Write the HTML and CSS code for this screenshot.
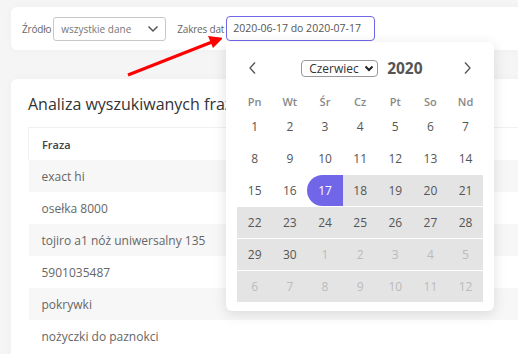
FILE: index.html
```html
<!DOCTYPE html>
<html lang="pl">
<head>
    <meta charset="UTF-8">
    <title>Analiza wyszukiwanych fraz</title>
    <link rel="stylesheet" href="styles.css">
</head>
<body>
    <div class="page">
        <div class="card filters">
            <label class="field-label">Źródło</label>
            <div class="select">
                <span>wszystkie dane</span>
                <svg width="12" height="8" viewBox="0 0 12 8"><path d="M1.5 1.5 L6 6 L10.5 1.5" fill="none" stroke="#555" stroke-width="1.5"/></svg>
            </div>
            <label class="field-label">Zakres dat</label>
            <div class="date-wrap">
                <div class="date-input">2020-06-17 do 2020-07-17</div>

                <div class="picker">
                    <div class="picker-head">
                        <svg class="nav" width="10" height="14" viewBox="0 0 10 14"><path d="M7 1.5 L2 7 L7 12.5" fill="none" stroke="#555" stroke-width="1.3"/></svg>
                        <div class="month-select">Czerwiec
                            <svg width="10" height="7" viewBox="0 0 10 7"><path d="M1.5 1.5 L5 5 L8.5 1.5" fill="none" stroke="#222" stroke-width="2"/></svg>
                        </div>
                        <span class="year">2020</span>
                        <svg class="nav next" width="10" height="14" viewBox="0 0 10 14"><path d="M3 1.5 L8 7 L3 12.5" fill="none" stroke="#555" stroke-width="1.3"/></svg>
                    </div>
                    <div class="weekdays">
                        <span>Pn</span><span>Wt</span><span>Śr</span><span>Cz</span><span>Pt</span><span>So</span><span>Nd</span>
                    </div>
                    <div class="days">
                        <div class="week">
                            <span>1</span><span>2</span><span>3</span><span>4</span><span>5</span><span>6</span><span>7</span>
                        </div>
                        <div class="week">
                            <span>8</span><span>9</span><span>10</span><span>11</span><span>12</span><span>13</span><span>14</span>
                        </div>
                        <div class="week">
                            <span>15</span><span>16</span><span class="start">17</span><span class="range">18</span><span class="range">19</span><span class="range">20</span><span class="range">21</span>
                        </div>
                        <div class="week in-range">
                            <span>22</span><span>23</span><span>24</span><span>25</span><span>26</span><span>27</span><span>28</span>
                        </div>
                        <div class="week in-range">
                            <span>29</span><span>30</span><span class="other">1</span><span class="other">2</span><span class="other">3</span><span class="other">4</span><span class="other">5</span>
                        </div>
                        <div class="week in-range">
                            <span class="other">6</span><span class="other">7</span><span class="other">8</span><span class="other">9</span><span class="other">10</span><span class="other">11</span><span class="other">12</span>
                        </div>
                    </div>
                </div>
            </div>
        </div>

        <div class="card report">
            <h2>Analiza wyszukiwanych fraz</h2>
            <table class="phrases">
                <thead>
                    <tr><th>Fraza</th></tr>
                </thead>
                <tbody>
                    <tr><td>exact hi</td></tr>
                    <tr><td>osełka 8000</td></tr>
                    <tr><td>tojiro a1 nóż uniwersalny 135</td></tr>
                    <tr><td>5901035487</td></tr>
                    <tr><td>pokrywki</td></tr>
                    <tr><td>nożyczki do paznokci</td></tr>
                </tbody>
            </table>
        </div>

        <svg class="arrow" width="110" height="50" viewBox="0 0 110 50">
            <line x1="16" y1="45" x2="100" y2="12" stroke="#f00" stroke-width="3"/>
            <path d="M111 8 L96 6 L101 18 Z" fill="#f00"/>
        </svg>
    </div>
</body>
</html>
```

FILE: styles.css
```css
body {
    margin: 0;
    background-color: #f5f5f6;
    font-family: "Open Sans", "Noto Sans", sans-serif;
    color: #555;
    overflow: hidden;
}

.page {
    position: relative;
    padding: 7px 0 0 11px;
    width: 640px;
}

.card {
    background: #ffffff;
    border-radius: 6px;
    box-shadow: 0 0 8px rgba(0, 0, 0, 0.03);
}

.filters {
    display: flex;
    align-items: center;
    height: 43px;
    padding-left: 11px;
    box-sizing: border-box;
}

.field-label {
    font-size: 10px;
    color: #666;
    margin-right: 2px;
    letter-spacing: -0.2px;
}

.select {
    display: flex;
    align-items: center;
    justify-content: space-between;
    width: 113px;
    height: 24px;
    box-sizing: border-box;
    border: 1px solid #c8c8c8;
    border-radius: 3px;
    padding: 0 6px 0 7px;
    margin-right: 11px;
    font-size: 10px;
    color: #777;
}

.date-wrap {
    position: relative;
}

.date-input {
    width: 149px;
    height: 25px;
    box-sizing: border-box;
    border: 1px solid #7166e8;
    border-radius: 4px;
    padding: 0 6px;
    font-size: 10.5px;
    line-height: 23px;
    white-space: nowrap;
    color: #555;
}

.picker {
    position: absolute;
    top: 26px;
    left: 0;
    z-index: 2;
    width: 268px;
    box-sizing: border-box;
    padding: 0 11px 9px;
    background: #ffffff;
    border-radius: 0 6px 6px 6px;
    box-shadow: 0 3px 14px rgba(0, 0, 0, 0.12);
}

.picker-head {
    display: flex;
    align-items: center;
    height: 52px;
    padding: 0 11px;
}

.month-select {
    display: flex;
    align-items: center;
    justify-content: space-between;
    width: 77px;
    height: 17px;
    box-sizing: border-box;
    margin-left: 43px;
    border: 1px solid #999;
    border-radius: 4px;
    padding: 0 3px 0 7px;
    font-size: 12px;
    color: #333;
}

.year {
    margin-left: 9px;
    font-size: 15.5px;
    font-weight: bold;
    color: #555;
}

.next {
    margin-left: auto;
}

.weekdays, .week {
    display: grid;
    grid-template-columns: repeat(7, 1fr);
}

.weekdays {
    height: 15px;
    margin-bottom: 2px;
    font-size: 11px;
    font-weight: 600;
    color: #888;
    text-align: center;
}

.days {
    display: flex;
    flex-direction: column;
    gap: 1px;
}

.week {
    height: 31px;
}

.week span {
    display: flex;
    align-items: center;
    justify-content: center;
    font-size: 12px;
    color: #555;
}

.in-range {
    background: #e4e4e4;
}

.range {
    background: #e4e4e4;
}

.start {
    background: #7166e8;
    border-radius: 16px 0 0 16px;
    color: #ffffff !important;
}

.week .other {
    color: #bbb;
}

.report {
    margin-top: 29px;
    padding: 14px 0 0 17px;
    height: 300px;
}

.report h2 {
    margin: 0 0 12px;
    font-size: 16px;
    font-weight: normal;
    color: #333;
}

.phrases {
    width: 100%;
    border-collapse: collapse;
    font-size: 12px;
}

.phrases th, .phrases td {
    height: 32px;
    padding: 0 13px;
    text-align: left;
}

.phrases th {
    font-size: 11px;
    font-weight: 600;
    color: #444;
    border: 1px solid #f0f0f0;
    border-bottom: none;
}

.phrases td {
    color: #666;
}

.phrases tbody tr:nth-child(odd) {
    background: #f7f7f7;
}

.arrow {
    position: absolute;
    left: 112px;
    top: 30px;
}
```
